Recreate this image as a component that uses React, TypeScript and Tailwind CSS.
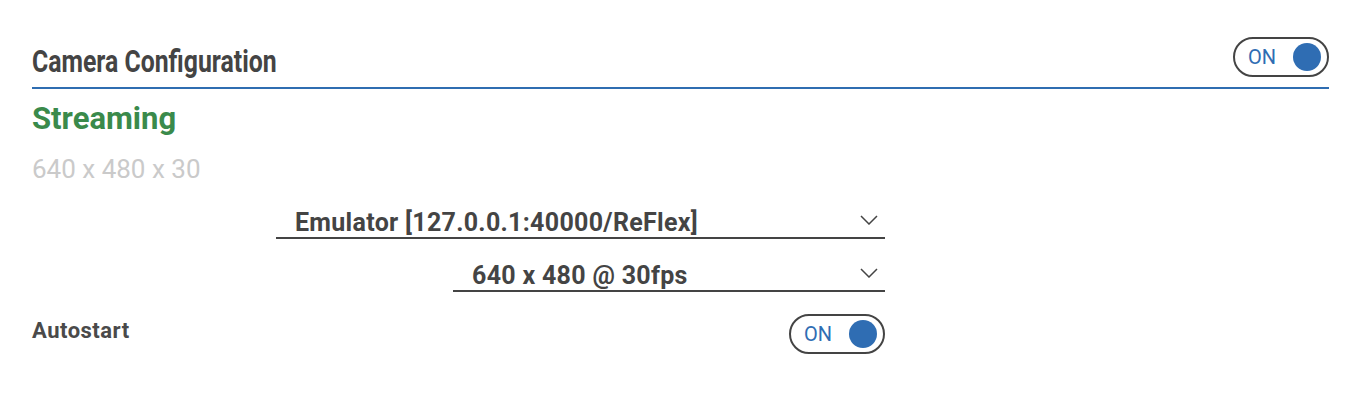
import React, { useState } from 'react'

const font = { fontFamily: 'Roboto, "Liberation Sans", sans-serif' }

function Toggle({ on, onChange }: { on: boolean; onChange: () => void }) {
  return (
    <button
      onClick={onChange}
      className="flex h-10 w-24 items-center justify-between rounded-full border-2 border-[#444] bg-white pl-[13px] pr-[6px]"
    >
      <span className="text-[20px] leading-none text-[#2f6db3]">{on ? 'ON' : 'OFF'}</span>
      <span className="h-7 w-7 rounded-full bg-[#2f6db3]" />
    </button>
  )
}

function Chevron() {
  return (
    <svg width="18" height="10" viewBox="0 0 18 10" fill="none" stroke="#444" strokeWidth="1.5">
      <path d="M1 1l8 8 8-8" />
    </svg>
  )
}

function Select({ value, className }: { value: string; className: string }) {
  return (
    <div className={'flex h-[40px] items-end justify-between border-b-2 border-[#444] pl-[19px] pr-[7px] ' + className}>
      <span className="text-[25px] font-bold leading-7 tracking-[0.3px] text-[#444]">{value}</span>
      <span className="pb-[12px]"><Chevron /></span>
    </div>
  )
}

export default function App() {
  const [camera, setCamera] = useState(true)
  const [autostart, setAutostart] = useState(true)

  return (
    <div className="min-h-[402px] bg-white pl-8 pr-[25px] pt-[37px]" style={font}>
      <div className="flex items-end justify-between border-b-2 border-[#2f6db1] pb-[10px]">
        <h2 className="origin-left scale-x-[0.8] text-[31px] font-bold leading-none text-[#444]">
          Camera Configuration
        </h2>
        <Toggle on={camera} onChange={() => setCamera(!camera)} />
      </div>

      <div className="mt-[12px] text-[31px] font-bold leading-9 text-[#3a8a4b]">Streaming</div>
      <div className="mt-[18px] text-[26px] leading-7 text-[#cacaca]">640 x 480 x 30</div>

      <div className="flex w-[853px] flex-col items-end gap-[13px] pt-[16px]">
        <Select value="Emulator [127.0.0.1:40000/ReFlex]" className="w-[609px]" />
        <Select value="640 x 480 @ 30fps" className="w-[432px]" />
      </div>

      <div className="mt-[22px] flex w-[853px] items-center justify-between">
        <span className="mb-[7px] text-[22px] font-bold tracking-[0.5px] text-[#4a4a4a]">Autostart</span>
        <Toggle on={autostart} onChange={() => setAutostart(!autostart)} />
      </div>
    </div>
  )
}
